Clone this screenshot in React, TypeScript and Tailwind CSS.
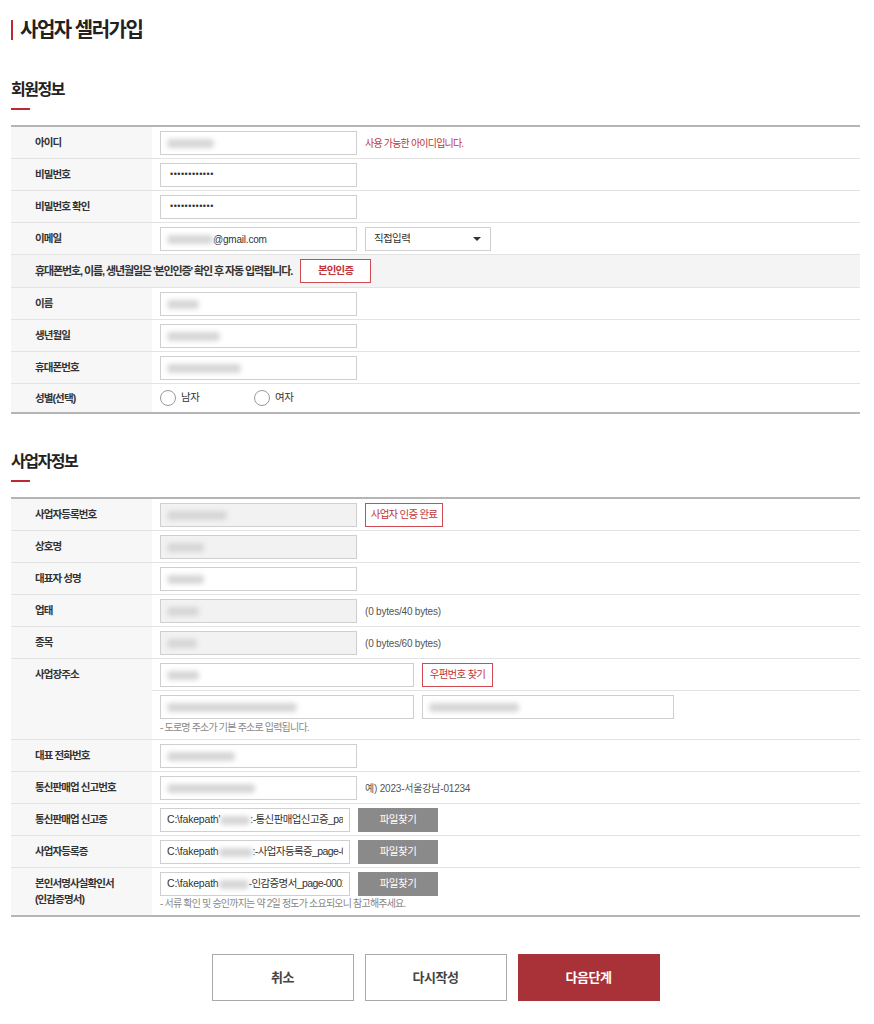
import type { ReactNode } from "react";

const FONT = { fontFamily: '"Liberation Sans", "Noto Sans CJK KR", sans-serif' };

function Blur({ w }: { w: string }) {
  return <span className={`inline-block h-[9px] ${w} shrink-0 rounded-sm bg-[#d6d6d6] blur-[2.5px]`} />;
}

function Field({
  width = "w-[197px]",
  disabled = false,
  children,
}: {
  width?: string;
  disabled?: boolean;
  children?: ReactNode;
}) {
  return (
    <div
      className={`flex h-[24px] ${width} shrink-0 items-center overflow-hidden whitespace-nowrap border border-[#cfcfcf] px-[6px] text-[10.5px] tracking-[-0.2px] text-[#333] ${
        disabled ? "bg-[#f2f2f2]" : "bg-white"
      }`}
    >
      {children}
    </div>
  );
}

function Label({ children, pt = "pt-[7px]" }: { children: ReactNode; pt?: string }) {
  return (
    <div
      className={`w-[141px] shrink-0 bg-[#f7f7f7] pb-[6px] pl-[24px] ${pt} text-[10.5px] font-bold leading-[16px] tracking-[-0.9px] text-[#333]`}
    >
      {children}
    </div>
  );
}

function Row({ label, children }: { label: ReactNode; children: ReactNode }) {
  return (
    <div className="flex border-b border-[#e3e3e3] last:border-b-0">
      <Label>{label}</Label>
      <div className="flex flex-1 items-center gap-[8px] pb-[3px] pl-[8px] pt-[4px]">{children}</div>
    </div>
  );
}

function OutlineBtn({ text, bold, width }: { text: string; bold?: boolean; width: string }) {
  return (
    <button
      className={`h-[24px] ${width} shrink-0 whitespace-nowrap border border-[#cf4b51] bg-white text-[10.5px] tracking-[-0.8px] text-[#c2343a] ${
        bold ? "font-bold" : ""
      }`}
    >
      {text}
    </button>
  );
}

function FileBtn() {
  return (
    <button className="h-[24px] w-[80px] shrink-0 bg-[#8a8a8a] text-[10.5px] tracking-[-0.5px] text-white">
      파일찾기
    </button>
  );
}

function FilePath({ prefix, blur, name }: { prefix: string; blur: string; name: string }) {
  return (
    <Field width="w-[190px]">
      <span className="shrink-0">{prefix}</span>
      <Blur w={blur} />
      <span className="min-w-0 overflow-hidden tracking-[-0.6px]">{name}</span>
    </Field>
  );
}

function Heading({ text }: { text: string }) {
  return (
    <div>
      <h2 className="text-[16px] font-bold leading-[20px] tracking-[-1.5px] text-[#222]">{text}</h2>
      <div className="mt-[8px] h-[2px] w-[19px] bg-[#c0282f]" />
    </div>
  );
}

function Radio({ label }: { label: string }) {
  return (
    <label className="flex w-[94px] items-center gap-[5px] text-[10.5px] tracking-[-0.5px] text-[#333]">
      <span className="h-[16px] w-[16px] rounded-full border border-[#999] bg-white" />
      {label}
    </label>
  );
}

const NOTE = "text-[10px] tracking-[-0.2px] text-[#555]";
const HINT = "text-[10px] leading-[14px] tracking-[-0.8px] text-[#888]";

export default function App() {
  return (
    <div style={FONT} className="min-h-[1024px] bg-white pb-[22px] pl-[11px] pr-[14px] pt-[20px]">
      {/* Title */}
      <h1 className="border-l-2 border-[#c0282f] pl-[7px] text-[20px] font-bold leading-[20px] tracking-[-1.5px] text-[#222]">
        사업자 셀러가입
      </h1>

      {/* 회원정보 */}
      <div className="mt-[40px]">
        <Heading text="회원정보" />
      </div>
      <div className="mt-[15px] border-y-2 border-[#b5b5b5]">
        <Row label="아이디">
          <Field>
            <Blur w="w-[47px]" />
          </Field>
          <span className="text-[10px] tracking-[-0.8px] text-[#c2343a]">사용 가능한 아이디입니다.</span>
        </Row>
        <Row label="비밀번호">
          <Field>
            <span className="pl-[3px] text-[9px] tracking-[0.5px]">••••••••••••</span>
          </Field>
        </Row>
        <Row label="비밀번호 확인">
          <Field>
            <span className="pl-[3px] text-[9px] tracking-[0.5px]">••••••••••••</span>
          </Field>
        </Row>
        <Row label="이메일">
          <Field>
            <Blur w="w-[46px]" />
            <span className="text-[10px]">@gmail.com</span>
          </Field>
          <div className="flex h-[24px] w-[126px] items-center justify-between border border-[#cfcfcf] bg-white pl-[8px] pr-[9px] text-[10.5px] tracking-[-0.6px] text-[#333]">
            직접입력
            <span className="h-0 w-0 border-x-[4px] border-t-[4px] border-x-transparent border-t-[#333]" />
          </div>
        </Row>
        <div className="flex items-center gap-[8px] border-b border-[#e3e3e3] bg-[#f4f4f4] py-[4px] pl-[24px]">
          <span className="text-[11px] font-bold tracking-[-1.1px] text-[#333]">
            휴대폰번호, 이름, 생년월일은 '본인인증' 확인 후 자동 입력됩니다.
          </span>
          <OutlineBtn text="본인인증" bold width="w-[71px]" />
        </div>
        <Row label="이름">
          <Field>
            <Blur w="w-[32px]" />
          </Field>
        </Row>
        <Row label="생년월일">
          <Field>
            <Blur w="w-[53px]" />
          </Field>
        </Row>
        <Row label="휴대폰번호">
          <Field>
            <Blur w="w-[74px]" />
          </Field>
        </Row>
        <div className="flex">
          <Label pt="pt-[6px]">성별(선택)</Label>
          <div className="flex items-center py-[6px] pl-[8px]">
            <Radio label="남자" />
            <Radio label="여자" />
          </div>
        </div>
      </div>

      {/* 사업자정보 */}
      <div className="mt-[38px]">
        <Heading text="사업자정보" />
      </div>
      <div className="mt-[15px] border-y-2 border-[#b5b5b5]">
        <Row label="사업자등록번호">
          <Field disabled>
            <Blur w="w-[60px]" />
          </Field>
          <OutlineBtn text="사업자 인증 완료" width="w-[78px]" />
        </Row>
        <Row label="상호명">
          <Field disabled>
            <Blur w="w-[37px]" />
          </Field>
        </Row>
        <Row label="대표자 성명">
          <Field>
            <Blur w="w-[37px]" />
          </Field>
        </Row>
        <Row label="업태">
          <Field disabled>
            <Blur w="w-[32px]" />
          </Field>
          <span className={NOTE}>(0 bytes/40 bytes)</span>
        </Row>
        <Row label="종목">
          <Field disabled>
            <Blur w="w-[30px]" />
          </Field>
          <span className={NOTE}>(0 bytes/60 bytes)</span>
        </Row>
        <div className="flex border-b border-[#e3e3e3]">
          <Label>사업장주소</Label>
          <div className="flex-1">
            <div className="flex items-center gap-[8px] border-b border-[#e3e3e3] pb-[3px] pl-[8px] pt-[4px]">
              <Field width="w-[254px]">
                <Blur w="w-[32px]" />
              </Field>
              <OutlineBtn text="우편번호 찾기" width="w-[71px]" />
            </div>
            <div className="pb-[4px] pl-[8px] pt-[4px]">
              <div className="flex gap-[8px]">
                <Field width="w-[254px]">
                  <Blur w="w-[130px]" />
                </Field>
                <Field width="w-[252px]">
                  <Blur w="w-[90px]" />
                </Field>
              </div>
              <p className={`mt-[2px] ${HINT}`}>- 도로명 주소가 기본 주소로 입력됩니다.</p>
            </div>
          </div>
        </div>
        <Row label="대표 전화번호">
          <Field>
            <Blur w="w-[68px]" />
          </Field>
        </Row>
        <Row label="통신판매업 신고번호">
          <Field>
            <Blur w="w-[88px]" />
          </Field>
          <span className={NOTE}>예) 2023-서울강남-01234</span>
        </Row>
        <Row label="통신판매업 신고증">
          <FilePath prefix="C:\fakepath'" blur="w-[30px]" name=":-통신판매업신고증_page-0001" />
          <FileBtn />
        </Row>
        <Row label="사업자등록증">
          <FilePath prefix="C:\fakepath" blur="w-[34px]" name=":-사업자등록증_page-0001" />
          <FileBtn />
        </Row>
        <div className="flex">
          <Label>
            본인서명사실확인서
            <br />
            (인감증명서)
          </Label>
          <div className="pb-[4px] pl-[8px] pt-[4px]">
            <div className="flex gap-[8px]">
              <FilePath prefix="C:\fakepath" blur="w-[30px]" name="-인감증명서_page-0001" />
              <FileBtn />
            </div>
            <p className={`mt-[1px] ${HINT}`}>- 서류 확인 및 승인까지는 약 2일 정도가 소요되오니 참고해주세요.</p>
          </div>
        </div>
      </div>

      {/* Buttons */}
      <div className="mt-[37px] flex justify-center gap-[11px]">
        <button className="h-[47px] w-[142px] border border-[#aaa] bg-white text-[13px] font-bold tracking-[-0.5px] text-[#444]">
          취소
        </button>
        <button className="h-[47px] w-[142px] border border-[#aaa] bg-white text-[13px] font-bold tracking-[-0.5px] text-[#444]">
          다시작성
        </button>
        <button className="h-[47px] w-[142px] bg-[#a93238] text-[13px] font-bold tracking-[-0.5px] text-white">
          다음단계
        </button>
      </div>
    </div>
  );
}
